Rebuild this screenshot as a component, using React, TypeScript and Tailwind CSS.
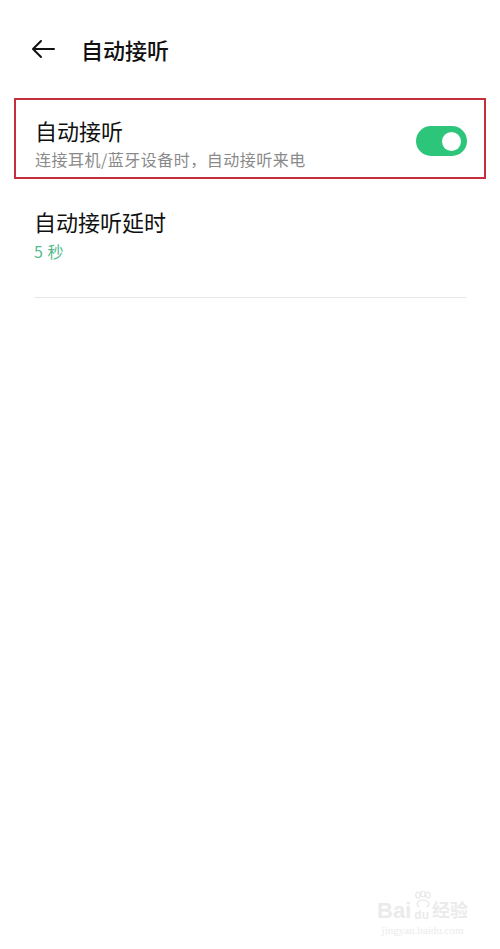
import { useState } from 'react';

const FONT = { fontFamily: '"Noto Sans CJK SC", "Noto Sans", sans-serif' };

function Toggle({ on, onChange }: { on: boolean; onChange: () => void }) {
  return (
    <button
      onClick={onChange}
      className={`flex h-[30px] w-[51px] shrink-0 items-center rounded-full px-[6px] ${
        on ? 'justify-end bg-[#2dc57a]' : 'justify-start bg-[#d9d9d9]'
      }`}
    >
      <span className="block h-[19px] w-[19px] rounded-full bg-white" />
    </button>
  );
}

export default function App() {
  const [autoAnswer, setAutoAnswer] = useState(true);

  return (
    <div className="relative h-[949px] w-[500px] bg-white text-[#111]" style={FONT}>
      {/* Title bar */}
      <div className="flex h-[100px] items-start pt-[33px]">
        <button className="ml-[30px] flex h-[32px] w-[28px] items-center">
          <svg width="26" height="20" viewBox="0 0 26 20" fill="none">
            <path
              d="M24 10H3M11 2L3 10l8 8"
              stroke="#111"
              strokeWidth="2"
              strokeLinecap="round"
              strokeLinejoin="round"
            />
          </svg>
        </button>
        <h1 className="ml-[23px] text-[22px] leading-[32px] font-medium">自动接听</h1>
      </div>

      {/* Auto answer (highlighted) */}
      <div className="mx-[14px] -mt-[2px] flex h-[81px] items-start border-2 border-[#c3303c] pt-[15px] pr-[17px] pl-[19px]">
        <div className="flex-1">
          <div className="text-[22px] leading-[30px]">自动接听</div>
          <div className="mt-[3px] text-[16px] leading-[22px] tracking-[0.5px] text-[#8a8a8a]">
            连接耳机/蓝牙设备时，自动接听来电
          </div>
        </div>
        <div className="mt-[11px]">
          <Toggle on={autoAnswer} onChange={() => setAutoAnswer(!autoAnswer)} />
        </div>
      </div>

      {/* Delay */}
      <div className="px-[34px] pt-[27px]">
        <div className="text-[22px] leading-[30px]">自动接听延时</div>
        <div className="mt-[4px] text-[16px] leading-[22px] tracking-[0.5px] text-[#55bb90]">5 秒</div>
        <div className="mt-[35px] h-px bg-[#e6e6e6]" />
      </div>

      {/* Watermark */}
      <div className="absolute right-[32px] bottom-[12px] flex flex-col items-center text-[#ebebeb]">
        <div
          className="relative flex items-end gap-[3px] text-[22px] leading-[24px] font-bold"
          style={{ fontFamily: '"Liberation Sans", "Noto Sans CJK SC", sans-serif' }}
        >
          <span>Bai</span>
          <span className="relative text-[12px] leading-[16px]">
            <svg className="absolute -top-[16px] left-[-1px]" width="20" height="16" viewBox="0 0 20 16" fill="none" stroke="#e6e6e6" strokeWidth="1.2">
              <ellipse cx="5" cy="4" rx="2.2" ry="3" />
              <ellipse cx="10" cy="3" rx="2.2" ry="3" />
              <ellipse cx="15" cy="4" rx="2.2" ry="3" />
              <ellipse cx="10" cy="13" rx="6" ry="4" />
            </svg>
            du
          </span>
          <span className="text-[18px]">经验</span>
        </div>
        <div className="text-[11px] leading-[14px]" style={{ fontFamily: '"Liberation Serif", serif' }}>
          jingyan.baidu.com
        </div>
      </div>
    </div>
  );
}
